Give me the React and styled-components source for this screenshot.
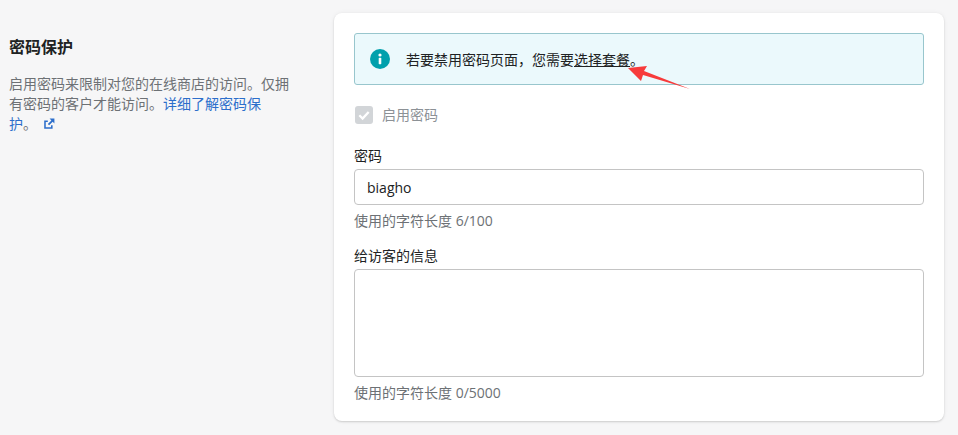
import React from 'react';
import styled, { createGlobalStyle } from 'styled-components';

const GlobalStyle = createGlobalStyle`
  html, body {
    margin: 0;
    padding: 0;
    background: #f6f6f7;
  }
  * {
    box-sizing: border-box;
  }
`;

const Page = styled.div`
  position: relative;
  width: 958px;
  height: 435px;
  overflow: hidden;
  display: grid;
  grid-template-columns: 285px 610px;
  column-gap: 40px;
  padding: 13px 0 0 9px;
  font-family: "Open Sans", "Noto Sans CJK SC", sans-serif;
  font-size: 14px;
  line-height: 20px;
  color: #202223;
`;

const Intro = styled.div`
  padding-top: 22px;
`;

const Heading = styled.h2`
  margin: 0 0 15px;
  font-size: 16px;
  line-height: 24px;
  font-weight: 700;
`;

const IntroText = styled.p`
  margin: 0;
  width: 285px;
  color: #6d7175;
  line-height: 20px;
`;

const DocLink = styled.a`
  color: #2c6ecb;
  text-decoration: none;
`;

const LinkIcon = styled.svg`
  width: 12px;
  height: 12px;
  margin-left: 6px;
  vertical-align: -1px;
`;

const Card = styled.section`
  width: 610px;
  height: 408px;
  padding: 20px;
  background: #fff;
  border-radius: 8px;
  box-shadow: 0 0 5px rgba(23, 24, 24, 0.05), 0 1px 2px rgba(0, 0, 0, 0.15);
`;

const Banner = styled.div`
  display: flex;
  align-items: center;
  gap: 16px;
  height: 52px;
  padding: 0 15px;
  background: #ebf9fc;
  border: 1px solid #98c6cd;
  border-radius: 3px;
`;

const InfoIcon = styled.svg`
  width: 20px;
  height: 20px;
  flex: none;
`;

const BannerText = styled.span`
  padding-top: 2px;
`;

const PlanLink = styled.a`
  color: #202223;
  text-decoration: underline;
`;

const CheckRow = styled.label`
  display: flex;
  align-items: center;
  gap: 9px;
  margin-top: 20px;
  padding-left: 1px;
  height: 20px;
  color: #8c9196;
`;

const CheckBox = styled.span`
  width: 18px;
  height: 18px;
  display: flex;
  align-items: center;
  justify-content: center;
  background: #d2d5d8;
  border-radius: 3px;
`;

const Field = styled.div`
  margin-top: ${(p) => p.$top}px;
`;

const FieldLabel = styled.div`
  margin-bottom: 4px;
  height: 20px;
  line-height: 22px;
`;

const TextInput = styled.div`
  height: 36px;
  padding: 2px 12px 0;
  display: flex;
  align-items: center;
  background: #fff;
  border: 1px solid #c4c4c4;
  border-radius: 4px;
`;

const TextArea = styled.div`
  height: 108px;
  background: #fff;
  border: 1px solid #c4c4c4;
  border-radius: 4px;
`;

const Counter = styled.div`
  margin-top: 5px;
  height: 20px;
  line-height: 22px;
  color: #6d7175;
`;

const Arrow = styled.svg`
  position: absolute;
  left: 620px;
  top: 58px;
  width: 80px;
  height: 40px;
`;

export default function App() {
  return (
    <Page>
      <GlobalStyle />
      <Intro>
        <Heading>密码保护</Heading>
        <IntroText>
          启用密码来限制对您的在线商店的访问。仅拥有密码的客户才能访问。
          <DocLink href="#">详细了解密码保<br />护</DocLink>。
          <LinkIcon viewBox="0 0 20 20" fill="#2c6ecb">
            <path d="M11 1h8v8l-2.8-2.8-6 6-2.2-2.2 6-6L11 1z" />
            <path d="M2 4h6v2.6H4.6v8.8h8.8V12H16v6H2V4z" />
          </LinkIcon>
        </IntroText>
      </Intro>
      <Card>
        <Banner>
          <InfoIcon viewBox="0 0 20 20">
            <circle cx="10" cy="10" r="10" fill="#00a0ac" />
            <circle cx="10" cy="6" r="1.6" fill="#fff" />
            <rect x="8.7" y="8.8" width="2.6" height="6.4" rx="0.6" fill="#fff" />
          </InfoIcon>
          <BannerText>
            若要禁用密码页面，您需要<PlanLink href="#">选择套餐</PlanLink>。
          </BannerText>
        </Banner>
        <CheckRow>
          <CheckBox>
            <svg width="14" height="14" viewBox="0 0 12 12" fill="none">
              <path d="M2 6.2l2.8 2.8L10 3.4" stroke="#fff" strokeWidth="2" />
            </svg>
          </CheckBox>
          启用密码
        </CheckRow>
        <Field $top={20}>
          <FieldLabel>密码</FieldLabel>
          <TextInput>biagho</TextInput>
          <Counter>使用的字符长度 6/100</Counter>
        </Field>
        <Field $top={15}>
          <FieldLabel>给访客的信息</FieldLabel>
          <TextArea />
          <Counter>使用的字符长度 0/5000</Counter>
        </Field>
      </Card>
      <Arrow viewBox="0 0 80 40">
        <path d="M8 10L27 8 24 13 70 31 23 17 21 23z" fill="#f73b3b" />
      </Arrow>
    </Page>
  );
}
